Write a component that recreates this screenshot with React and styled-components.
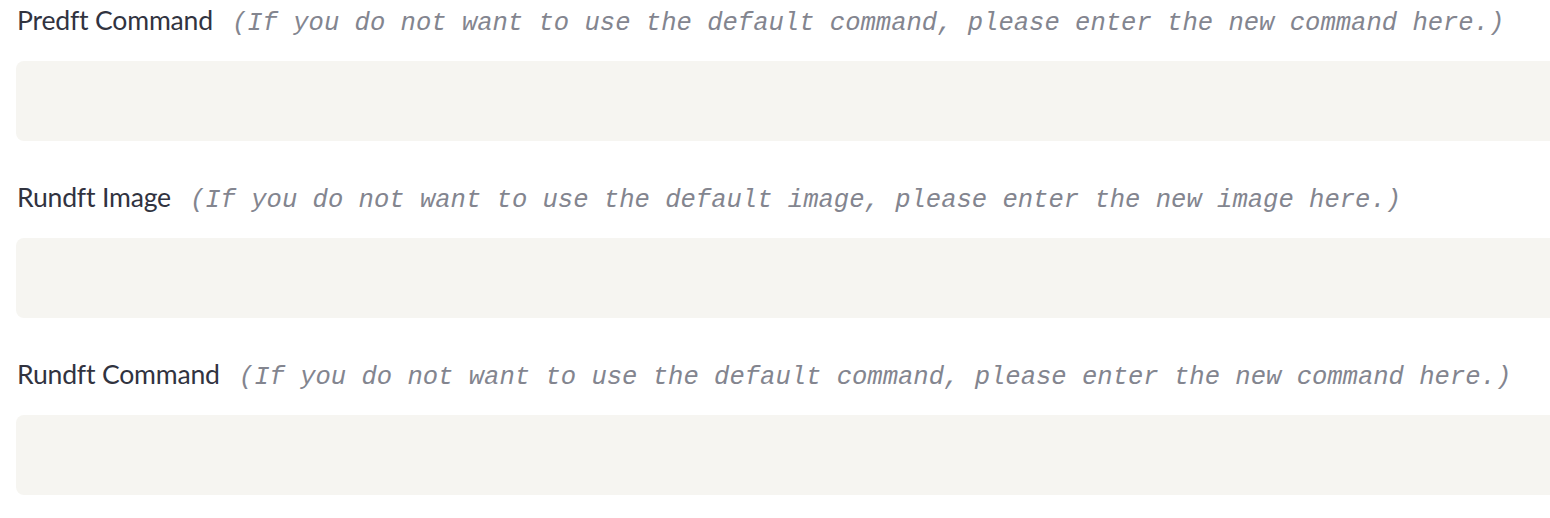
import styled, { createGlobalStyle } from 'styled-components';

const GlobalStyle = createGlobalStyle`
    html, body {
        margin: 0;
        padding: 0;
        background: #ffffff;
        overflow: hidden;
    }
`;

const Page = styled.div`
    display: flex;
    flex-direction: column;
    gap: 36px;
    padding: 0 0 0 16px;
    width: 1560px;
`;

const Field = styled.div`
    display: flex;
    flex-direction: column;
    gap: 21px;
`;

const LabelRow = styled.div`
    display: flex;
    align-items: baseline;
    gap: 19px;
    height: 40px;
    line-height: 40px;
    padding-left: 1px;
`;

const Label = styled.span`
    font-family: Lato, "Noto Sans", sans-serif;
    font-size: 26.6px;
    color: #31333f;
    letter-spacing: -0.2px;
`;

const Hint = styled.span`
    font-family: "Liberation Mono", "DejaVu Sans Mono", monospace;
    font-style: italic;
    font-size: 25.55px;
    color: #83858f;
`;

const Box = styled.textarea`
    display: block;
    box-sizing: border-box;
    width: 100%;
    height: 80px;
    margin: 0;
    border: none;
    border-radius: 8px;
    background: #f6f5f1;
    resize: none;
    outline: none;
    padding: 12px 16px;
    font-family: "Liberation Mono", monospace;
    font-size: 20px;
`;

const fields = [
    { label: "Predft Command", hint: "(If you do not want to use the default command, please enter the new command here.)" },
    { label: "Rundft Image", hint: "(If you do not want to use the default image, please enter the new image here.)" },
    { label: "Rundft Command", hint: "(If you do not want to use the default command, please enter the new command here.)" },
];

function App() {
    return (
        <>
            <GlobalStyle />
            <Page>
                {fields.map(f => (
                    <Field key={f.label}>
                        <LabelRow>
                            <Label>{f.label}</Label>
                            <Hint>{f.hint}</Hint>
                        </LabelRow>
                        <Box />
                    </Field>
                ))}
            </Page>
        </>
    );
}

export default App;
